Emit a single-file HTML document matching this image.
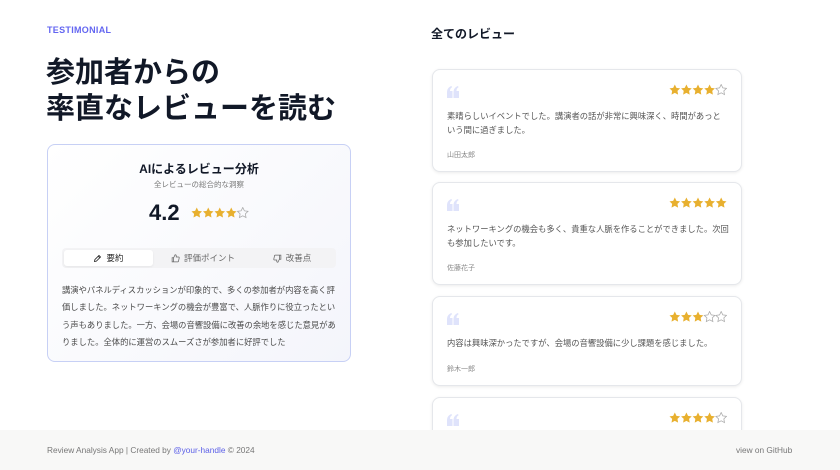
<!DOCTYPE html><html><head><meta charset="utf-8"><style>
*{margin:0;padding:0;box-sizing:border-box}
body{width:840px;height:470px;overflow:hidden;background:#fff;font-family:"Liberation Sans","Noto Sans CJK JP",sans-serif;position:relative;color:#111827}
.tag{position:absolute;left:47px;top:25px;font-size:9px;font-weight:bold;color:#6366f1;letter-spacing:.3px}
h1{position:absolute;left:46px;top:55px;font-size:29px;line-height:36px;font-weight:bold;color:#111827}
.card{position:absolute;left:47px;top:144px;width:304px;height:218px;border:1px solid #c7d0f5;border-radius:8px;background:linear-gradient(135deg,#fff,#f4f5fb)}
.ct{position:absolute;top:15px;width:100%;text-align:center;font-size:12px;font-weight:bold}
.cs{position:absolute;top:34px;width:100%;text-align:center;font-size:7.5px;color:#777}
.score{position:absolute;left:101px;top:55px;font-size:22px;font-weight:bold}
.tabs{position:absolute;left:14px;top:103px;width:274px;height:20px;background:#f3f3f5;border-radius:4px}
.tab{position:absolute;top:2px;height:16px;font-size:8.5px;line-height:16px;color:#666;text-align:center}
.tab.on{left:2px;width:89px;background:#fff;border-radius:3px;color:#222;box-shadow:0 1px 2px rgba(0,0,0,.06)}
.tab svg{margin-right:4px;vertical-align:-2px}
.body{position:absolute;left:14px;top:137px;width:280px;font-size:8.3px;line-height:17.3px;color:#4b4b4b}
.rh{position:absolute;left:431px;top:25px;font-size:12px;font-weight:bold}
.rv{position:absolute;left:432px;width:310px;border:1px solid #e5e7eb;border-radius:8px;background:#fff;box-shadow:0 1px 3px rgba(0,0,0,.08)}
.q{position:absolute;left:14px;top:15px}
.st{position:absolute;right:14px;top:14px;line-height:0}
.txt{position:absolute;left:14px;top:40px;width:282px;font-size:8.3px;line-height:13.5px;color:#555}
.nm{position:absolute;left:14px;font-size:7px;color:#888}
.foot{position:absolute;left:0;top:430px;width:840px;height:40px;background:#f8f8f7;font-size:8.3px;color:#777}
.foot span{position:absolute;top:15px}
</style></head><body>
<div class="tag">TESTIMONIAL</div>
<h1>参加者からの<br>率直なレビューを読む</h1>
<div class="card">
<div class="ct">AIによるレビュー分析</div>
<div class="cs">全レビューの総合的な洞察</div>
<div class="score">4.2</div>
<div id="s4" style="position:absolute;left:143px;top:62px;line-height:0"></div>
<div class="tabs">
<div class="tab on"><svg width="9" height="9" viewBox="0 0 24 24" fill="none" stroke="#222" stroke-width="2.2"><path d="M4 20l1-5L16 4l4 4L9 19z M14 6l4 4"/></svg>要約</div>
<div class="tab" style="left:96px;width:90px"><svg width="9" height="9" viewBox="0 0 24 24" fill="none" stroke="#666" stroke-width="2"><path d="M7 10v11H3V10z M7 10l4-8c2 0 3 1 3 3v3h6c1 0 2 1 2 2l-2 9c0 1-1 2-2 2H7"/></svg>評価ポイント</div>
<div class="tab" style="left:186px;width:88px"><svg width="9" height="9" viewBox="0 0 24 24" fill="none" stroke="#666" stroke-width="2"><path d="M17 14V3h4v11z M17 14l-4 8c-2 0-3-1-3-3v-3H4c-1 0-2-1-2-2l2-9c0-1 1-2 2-2h11"/></svg>改善点</div>
</div>
<div class="body">講演やパネルディスカッションが印象的で、多くの参加者が内容を高く評価しました。ネットワーキングの機会が豊富で、人脈作りに役立ったという声もありました。一方、会場の音響設備に改善の余地を感じた意見がありました。全体的に運営のスムーズさが参加者に好評でした</div>
</div>
<div class="rh">全てのレビュー</div>
<div class="rv" style="top:69px;height:103px"><div class="q"></div><div class="st" data-n="4"></div><div class="txt">素晴らしいイベントでした。講演者の話が非常に興味深く、時間があっという間に過ぎました。</div><div class="nm" style="top:80px">山田太郎</div></div>
<div class="rv" style="top:182px;height:103px"><div class="q"></div><div class="st" data-n="5"></div><div class="txt">ネットワーキングの機会も多く、貴重な人脈を作ることができました。次回も参加したいです。</div><div class="nm" style="top:80px">佐藤花子</div></div>
<div class="rv" style="top:296px;height:90px"><div class="q"></div><div class="st" data-n="3"></div><div class="txt">内容は興味深かったですが、会場の音響設備に少し課題を感じました。</div><div class="nm" style="top:67px">鈴木一郎</div></div>
<div class="rv" style="top:397px;height:60px"><div class="q"></div><div class="st" data-n="4"></div></div>
<div class="foot"><span style="left:47px">Review Analysis App | Created by <b style="font-weight:normal;color:#5b5fe8">@your-handle</b> © 2024</span><span style="left:736px">view on GitHub</span></div>
<script>
function stars(n,sz){var w=5*sz;var s='<svg width="'+w+'" height="'+sz+'" viewBox="0 0 '+w+' '+sz+'">';for(var i=0;i<5;i++){var k=sz/24;var p='M12 1l3.4 7 7.6 1-5.5 5.3 1.3 7.6L12 18.3 5.2 21.9 6.5 14.3 1 9l7.6-1z';s+='<path transform="translate('+(i*sz)+',0) scale('+k+')" d="'+p+'" '+(i<n?'fill="#e8b02f"':'fill="none" stroke="#aaa" stroke-width="1.6"')+'/>';}return s+'</svg>';}
document.getElementById('s4').innerHTML=stars(4,11.5);
document.querySelectorAll('.st').forEach(function(e){e.innerHTML=stars(+e.dataset.n,11.6)});
var qs='<svg width="12" height="12" viewBox="0 0 12 12" fill="#dfe3fb"><path d="M0 12V6.5C0 3 1.5 1 4.5 0l.6 1.3C3.6 2 3 3.2 3 5h2.5v7z M6.5 12V6.5C6.5 3 8 1 11 0l.6 1.3C10.1 2 9.5 3.2 9.5 5H12v7z"/></svg>';
document.querySelectorAll('.q').forEach(function(e){e.innerHTML=qs});
</script>
</body></html>
